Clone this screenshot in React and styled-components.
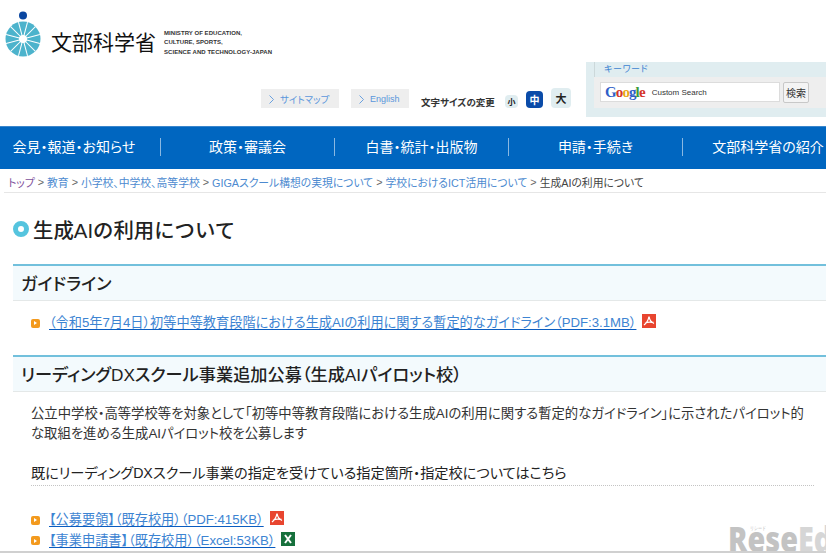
import React from 'react'
import styled, { createGlobalStyle } from 'styled-components'

const GlobalStyle = createGlobalStyle`
  html, body {
    margin: 0;
    padding: 0;
    background: #fff;
  }
  body {
    font-family: "Liberation Sans", "Noto Sans CJK JP", sans-serif;
    font-feature-settings: "palt";
    color: #222;
  }
`

const Page = styled.div`
  position: relative;
  width: 826px;
  height: 553px;
  overflow: hidden;
  background: #fff;
  border-bottom: 2px solid #d0d0d0;
  box-sizing: border-box;
`

const Header = styled.header`
  height: 126px;
  display: flex;
  flex-direction: column;
`

const LogoRow = styled.div`
  height: 62px;
  display: flex;
  align-items: flex-start;
  padding: 11px 0 0 5px;
  box-sizing: border-box;
`

const LogoName = styled.span`
  font-family: "Noto Sans CJK JP", sans-serif;
  font-feature-settings: normal;
  font-weight: 400;
  font-size: 21px;
  line-height: 26px;
  color: #111;
  margin: 17px 0 0 10px;
  white-space: nowrap;
`

const LogoEnglish = styled.span`
  font-size: 6px;
  font-weight: 700;
  line-height: 9.3px;
  letter-spacing: 0.05px;
  color: #333;
  margin: 18px 0 0 8px;
  white-space: nowrap;
`

const ToolRow = styled.div`
  height: 64px;
  display: flex;
  align-items: flex-start;
`

const ToolLinks = styled.div`
  width: 586px;
  height: 64px;
  display: flex;
  align-items: flex-start;
  padding: 27px 0 0 261px;
  box-sizing: border-box;
  flex: none;
`

const ToolLink = styled.a`
  height: 19px;
  width: ${p => p.$w}px;
  margin-right: ${p => p.$gap}px;
  background: #eeeeee;
  color: #5b97dc;
  font-size: ${p => p.$fs}px;
  line-height: 19px;
  padding: 1px 0 0 8px;
  box-sizing: border-box;
  display: flex;
  align-items: center;
  gap: 6px;
  white-space: nowrap;
`

const SizeLabel = styled.span`
  font-size: 9.5px;
  font-weight: 700;
  color: #333;
  margin: 6px 10px 0 0;
  width: 74px;
  white-space: nowrap;
`

const SizeButton = styled.span`
  width: ${p => p.$s}px;
  height: ${p => p.$s}px;
  margin: ${p => p.$top}px ${p => p.$gap}px 0 0;
  border-radius: 4px;
  background: ${p => (p.$active ? '#0a4ba8' : '#e0edf0')};
  color: ${p => (p.$active ? '#fff' : '#222')};
  font-size: ${p => p.$fs}px;
  font-weight: 700;
  display: flex;
  align-items: center;
  justify-content: center;
  flex: none;
`

const SearchPanel = styled.div`
  width: 240px;
  height: 55px;
  background: #e0edf0;
  padding-left: 8px;
  box-sizing: border-box;
  flex: none;
`

const SearchLabel = styled.div`
  height: 15px;
  font-size: 9px;
  line-height: 15px;
  color: #3d84d2;
  letter-spacing: 0.6px;
  padding-left: 9px;
  border-left: 1px solid #ccd8da;
  box-sizing: border-box;
`

const SearchBody = styled.div`
  height: 31px;
  background: #eeeeee;
  display: flex;
  align-items: flex-start;
  padding: 5px 0 0 6px;
  box-sizing: border-box;
`

const SearchInput = styled.div`
  width: 180px;
  height: 20px;
  background: #fff;
  border: 1px solid #dcdcdc;
  box-sizing: border-box;
  display: flex;
  align-items: center;
  padding-left: 4px;
`

const GoogleMark = styled.span`
  font-family: "Liberation Serif", serif;
  font-size: 15px;
  font-weight: 700;
  letter-spacing: -0.9px;
  line-height: 18px;
`

const GoogleLetter = styled.span`
  color: ${p => p.$c};
`

const CustomSearch = styled.span`
  font-size: 8px;
  color: #333;
  margin-left: 7px;
  white-space: nowrap;
`

const SearchButton = styled.span`
  width: 26px;
  height: 21px;
  margin-left: 3px;
  background: #f4f4f4;
  border: 1px solid #c8c8c8;
  border-radius: 2px;
  box-sizing: border-box;
  font-size: 10px;
  color: #333;
  display: flex;
  align-items: center;
  justify-content: center;
`

const Nav = styled.nav`
  height: 43px;
  background: #0066c0;
  border-top: 1px solid #3a86cc;
  box-sizing: border-box;
  display: flex;
  align-items: center;
  padding-bottom: 3px;
`

const NavItem = styled.a`
  flex: none;
  width: ${p => p.$w}px;
  height: 18px;
  padding: 0 ${p => p.$pad || 0}px 2px 0;
  display: flex;
  align-items: center;
  justify-content: center;
  color: #fff;
  font-size: 14px;
  white-space: nowrap;
  border-right: ${p => (p.$last ? 'none' : '1px solid #8ab8e2')};
  box-sizing: border-box;
`

const Crumbs = styled.div`
  height: 24px;
  margin-left: 4px;
  padding: 3px 0 0 4px;
  border-bottom: 1px solid #e6e6e6;
  box-sizing: border-box;
  display: flex;
  align-items: center;
  font-size: 10.8px;
  color: #444;
  white-space: nowrap;
`

const Crumb = styled.a`
  color: ${p => (p.$visited ? '#80509c' : '#4c8ad0')};
`

const Sep = styled.span`
  margin: 0 3px;
  color: #666;
`

const Title = styled.h1`
  margin: 0;
  height: 71px;
  padding: 1px 0 0 13px;
  display: flex;
  align-items: center;
  gap: 4px;
  font-size: 20.4px;
  font-weight: 500;
  font-feature-settings: normal;
  color: #222;
  box-sizing: border-box;
`

const TitleDot = styled.span`
  width: 16px;
  height: 16px;
  border-radius: 50%;
  border: 5px solid #55c4de;
  background: #fff;
  box-sizing: border-box;
  flex: none;
`

const SectionHead = styled.h2`
  margin: 0 0 0 13px;
  height: 37px;
  padding: 0 0 2px 8px;
  background: #f3fafd;
  border-top: 2px solid #72c0dc;
  border-bottom: 1px solid #e4e8e8;
  box-sizing: border-box;
  display: flex;
  align-items: center;
  font-size: 17.2px;
  font-weight: 500;
  color: #222;
  white-space: nowrap;
`

const FileRow = styled.div`
  display: flex;
  align-items: center;
  height: ${p => p.$h}px;
  padding-left: 31px;
  font-size: 13.2px;
  white-space: nowrap;
`

const Bullet = styled.span`
  width: 9px;
  height: 9px;
  border-radius: 2px;
  background: #f39a1e;
  margin: 1px 9px 0 0;
  display: flex;
  align-items: center;
  justify-content: center;
  flex: none;
  &::after {
    content: '';
    border-left: 3px solid #fff;
    border-top: 2px solid transparent;
    border-bottom: 2px solid transparent;
  }
`

const FileLink = styled.a`
  color: #3d84d2;
  margin-top: -2px;
  text-decoration: underline;
  text-decoration-color: #0a5cc0;
  text-underline-offset: 2px;
`

const FileIcon = styled.svg`
  width: 14px;
  height: 14px;
  margin: -3px 0 0 6px;
  flex: none;
`

const Gap = styled.div`
  height: ${p => p.$h}px;
`

const Para = styled.p`
  margin: 0 12px 0 31px;
  font-size: 13.35px;
  line-height: 20px;
  color: #333;
`

const DottedLead = styled.div`
  margin: 0 12px 0 31px;
  height: 21px;
  border-bottom: 1px dotted #c4c4c4;
  font-size: 14.2px;
  line-height: 19px;
  color: #222;
  white-space: nowrap;
`

const Watermark = styled.div`
  position: absolute;
  left: 728px;
  bottom: -10px;
  font-family: "Open Sans", sans-serif;
  font-weight: 800;
  font-size: 36px;
  line-height: 44px;
  color: #b9b9b9;
  opacity: 0.85;
  transform: scaleX(0.8);
  transform-origin: left;
  white-space: nowrap;
`

const WatermarkEd = styled.span`
  color: #d0d0d0;
`

const WatermarkKana = styled.span`
  position: absolute;
  left: 27px;
  top: 7px;
  font-size: 5px;
  font-weight: 400;
  line-height: 8px;
  color: #aaa;
  white-space: nowrap;
`

function Emblem() {
  const spokes = Array.from({ length: 12 }, (_, i) => i * 30 + 15)
  return (
    <svg width="36" height="47" viewBox="0 0 36 47" style={{ flex: 'none' }}>
      <circle cx="18" cy="4.5" r="4" fill="#0a46a0" />
      <circle cx="18" cy="28" r="17.5" fill="#4cb3cc" />
      {spokes.map(a => (
        <line key={a} x1="18" y1="28" x2="18" y2="10.5" stroke="#fff" strokeWidth="1"
          transform={`rotate(${a} 18 28)`} />
      ))}
      <circle cx="18" cy="28" r="4" fill="#fff" />
    </svg>
  )
}

function PdfIcon() {
  return (
    <FileIcon viewBox="0 0 14 14">
      <rect width="14" height="14" fill="#e8452f" />
      <path d="M7 2.5 C6.5 5.5 4.5 9 2 11 M7 2.5 C7.5 5.5 9.5 8.5 12 9.5 M3 9 C5.5 8 8.5 7.8 11.5 8.5"
        fill="none" stroke="#fff" strokeWidth="1.3" />
    </FileIcon>
  )
}

function ExcelIcon() {
  return (
    <FileIcon viewBox="0 0 14 14">
      <rect width="14" height="14" fill="#17703c" />
      <path d="M4 3 L10 11 M10 3 L4 11" stroke="#fff" strokeWidth="2" />
    </FileIcon>
  )
}

const Chevron = () => (
  <svg width="5" height="9" viewBox="0 0 5 9">
    <path d="M0.5 0.5 L4.5 4.5 L0.5 8.5" fill="none" stroke="#5b97dc" strokeWidth="0.9" />
  </svg>
)

const navItems = [
  ['会見・報道・お知らせ', 161, 12],
  ['政策・審議会', 174],
  ['白書・統計・出版物', 174],
  ['申請・手続き', 174],
  ['文部科学省の紹介', 170],
]

const crumbs = ['教育', '小学校、中学校、高等学校', 'GIGAスクール構想の実現について', '学校におけるICT活用について']

export default function App() {
  return (
    <Page>
      <GlobalStyle />
      <Header>
        <LogoRow>
          <Emblem />
          <LogoName>文部科学省</LogoName>
          <LogoEnglish>
            MINISTRY OF EDUCATION,<br />
            CULTURE, SPORTS,<br />
            SCIENCE AND TECHNOLOGY-JAPAN
          </LogoEnglish>
        </LogoRow>
        <ToolRow>
          <ToolLinks>
            <ToolLink $w={78} $gap={12} $fs={9.5}><Chevron />サイトマップ</ToolLink>
            <ToolLink $w={58} $gap={12} $fs={9}><Chevron />English</ToolLink>
            <SizeLabel>文字サイズの変更</SizeLabel>
            <SizeButton $s={13} $top={6} $gap={8} $fs={8}>小</SizeButton>
            <SizeButton $s={17} $top={2} $gap={8} $fs={10} $active>中</SizeButton>
            <SizeButton $s={20} $top={-1} $gap={0} $fs={11}>大</SizeButton>
          </ToolLinks>
          <SearchPanel>
            <SearchLabel>キーワード</SearchLabel>
            <SearchBody>
              <SearchInput>
                <GoogleMark>
                  <GoogleLetter $c="#2f5fc8">G</GoogleLetter>
                  <GoogleLetter $c="#d5362a">o</GoogleLetter>
                  <GoogleLetter $c="#e8a818">o</GoogleLetter>
                  <GoogleLetter $c="#2f5fc8">g</GoogleLetter>
                  <GoogleLetter $c="#3f9c3a">l</GoogleLetter>
                  <GoogleLetter $c="#d5362a">e</GoogleLetter>
                </GoogleMark>
                <CustomSearch>Custom Search</CustomSearch>
              </SearchInput>
              <SearchButton>検索</SearchButton>
            </SearchBody>
          </SearchPanel>
        </ToolRow>
      </Header>
      <Nav>
        {navItems.map(([label, w, pad], i) => (
          <NavItem key={label} $w={w} $pad={pad} $last={i === navItems.length - 1}>{label}</NavItem>
        ))}
      </Nav>
      <Crumbs>
        <Crumb $visited>トップ</Crumb>
        {crumbs.map(c => (
          <React.Fragment key={c}>
            <Sep>&gt;</Sep>
            <Crumb>{c}</Crumb>
          </React.Fragment>
        ))}
        <Sep>&gt;</Sep>
        生成AIの利用について
      </Crumbs>
      <Title><TitleDot />生成AIの利用について</Title>
      <SectionHead>ガイドライン</SectionHead>
      <FileRow $h={43}>
        <Bullet />
        <FileLink>（令和5年7月4日）初等中等教育段階における生成AIの利用に関する暫定的なガイドライン（PDF:3.1MB）</FileLink>
        <PdfIcon />
      </FileRow>
      <Gap $h={11} />
      <SectionHead>リーディングDXスクール事業追加公募（生成AIパイロット校）</SectionHead>
      <Gap $h={12} />
      <Para>公立中学校・高等学校等を対象として「初等中等教育段階における生成AIの利用に関する暫定的なガイドライン」に示されたパイロット的な取組を進める生成AIパイロット校を公募します</Para>
      <Gap $h={20} />
      <DottedLead>既にリーディングDXスクール事業の指定を受けている指定箇所・指定校についてはこちら</DottedLead>
      <Gap $h={23} />
      <FileRow $h={21}>
        <Bullet />
        <FileLink>【公募要領】（既存校用）（PDF:415KB）</FileLink>
        <PdfIcon />
      </FileRow>
      <FileRow $h={20}>
        <Bullet />
        <FileLink>【事業申請書】（既存校用）（Excel:53KB）</FileLink>
        <ExcelIcon />
      </FileRow>
      <Watermark><WatermarkKana>リシード</WatermarkKana>Rese<WatermarkEd>Ed</WatermarkEd></Watermark>
    </Page>
  )
}
